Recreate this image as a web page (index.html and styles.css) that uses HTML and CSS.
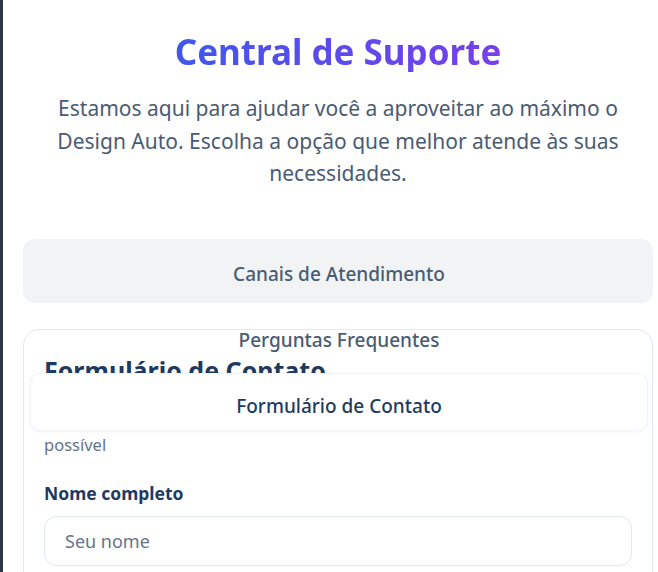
FILE: index.html
```html
<!DOCTYPE html>
<html lang="pt-BR">
<head>
<meta charset="utf-8">
<title>Central de Suporte</title>
<link rel="stylesheet" href="styles.css">
</head>
<body>
<div class="page">
  <header class="hero">
    <h1 class="title">Central de Suporte</h1>
    <p class="lead">Estamos aqui para ajudar você a aproveitar ao máximo o Design Auto. Escolha a opção que melhor atende às suas necessidades.</p>
  </header>
  <div class="tabs">
    <div class="tablist">
      <button class="tab">Canais de Atendimento</button>
      <button class="tab">Perguntas Frequentes</button>
      <button class="tab active">Formulário de Contato</button>
    </div>
    <section class="card">
      <h2 class="card-title">Formulário de Contato</h2>
      <p class="desc">Preencha o formulário abaixo e nossa equipe responderá o mais rápido possível</p>
      <form class="form">
        <label class="label" for="nome">Nome completo</label>
        <input class="input" id="nome" type="text" placeholder="Seu nome">
      </form>
    </section>
  </div>
</div>
</body>
</html>
```
FILE: styles.css
```css
html, body {
  margin: 0;
  background: #ffffff;
}
body {
  font-family: "Noto Sans", "Open Sans", sans-serif;
  overflow: hidden;
}
.page {
  border-left: 3px solid #2f3441;
  min-height: 572px;
  box-sizing: border-box;
  padding: 32px 5px 0 20px;
}
.title {
  margin: 0;
  font-size: 35px;
  line-height: 40px;
  font-weight: 700;
  text-align: center;
  background: linear-gradient(90deg, #2563eb, #9333ea);
  -webkit-background-clip: text;
  background-clip: text;
  color: transparent;
}
.lead {
  margin: 20px auto 0;
  max-width: 590px;
  font-size: 21px;
  line-height: 32.5px;
  color: #4a5b74;
  text-align: center;
}
.tabs {
  margin-top: 49px;
}
.tablist {
  position: relative;
  z-index: 1;
  height: 64px;
  box-sizing: border-box;
  background: #f1f3f5;
  border-radius: 12px;
  padding: 2px 5px 0 7px;
  display: grid;
  grid-auto-rows: 58px;
  row-gap: 8px;
}
.tab {
  font-family: inherit;
  font-size: 19px;
  font-weight: 500;
  color: #4a5b74;
  background: transparent;
  border: 1px solid transparent;
  border-radius: 10px;
  padding: 8px 0 0;
}
.tab.active {
  background: #ffffff;
  color: #1e3a5f;
  border-color: #f1f5f9;
  box-shadow: 0 1px 3px rgba(15, 23, 42, 0.05);
}
.card {
  margin-top: 26px;
  border: 1px solid #e2e8f0;
  border-radius: 16px;
  padding: 24px 20px;
}
.card-title {
  margin: 0;
  font-size: 25px;
  line-height: 32px;
  font-weight: 700;
  color: #1e3a5f;
}
.desc {
  margin: 23px 0 0;
  font-size: 16.5px;
  line-height: 24px;
  color: #64748b;
}
.form {
  margin-top: 24px;
}
.label {
  display: block;
  font-size: 17.5px;
  line-height: 24px;
  font-weight: 700;
  color: #1e3a5f;
}
.input {
  display: block;
  margin-top: 11px;
  width: 100%;
  height: 50px;
  box-sizing: border-box;
  border: 1px solid #e2e8f0;
  border-radius: 12px;
  padding: 0 20px;
  font-family: inherit;
  font-size: 18px;
  color: #1e293b;
  background: #ffffff;
}
.input::placeholder {
  color: #64748b;
}
```
